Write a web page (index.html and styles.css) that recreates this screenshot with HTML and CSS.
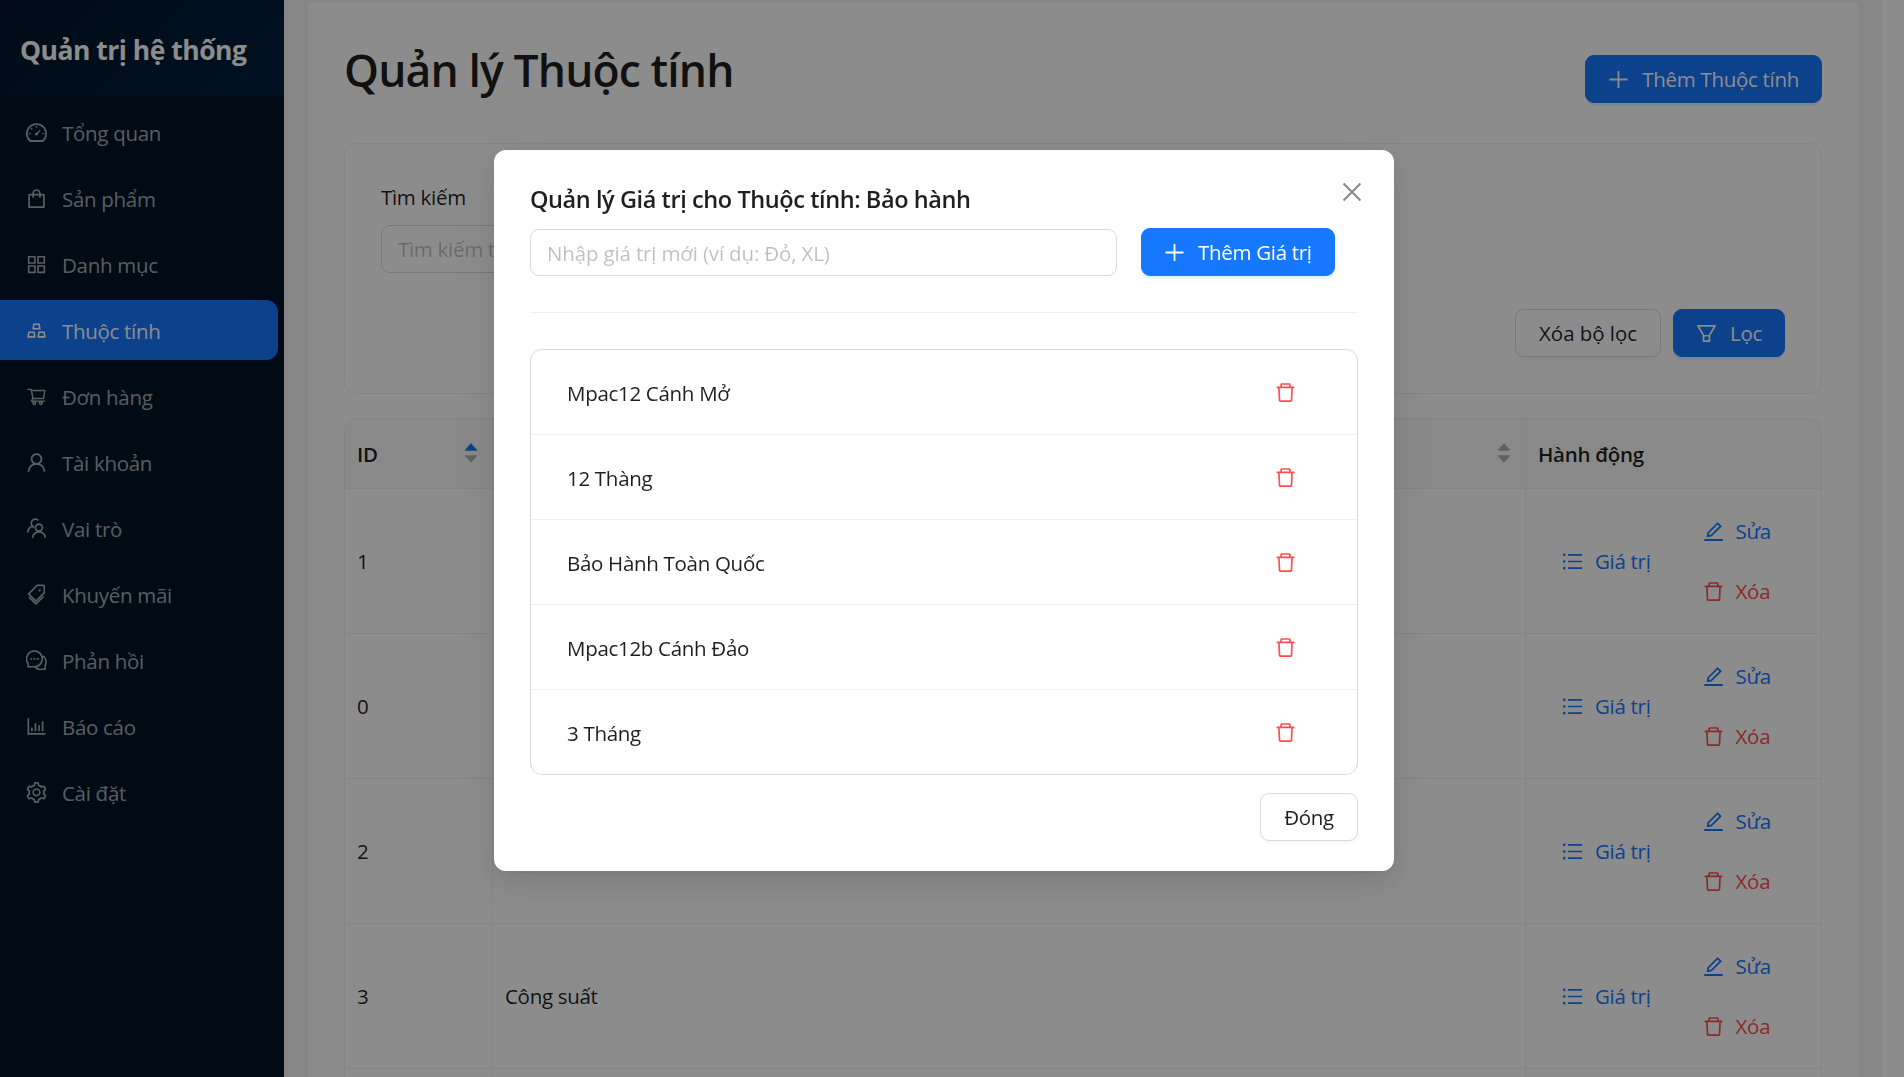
FILE: index.html
```html
<!DOCTYPE html>
<html lang="vi">
<head>
<meta charset="utf-8">
<title>Quản lý Thuộc tính</title>
<link rel="stylesheet" href="styles.css">
</head>
<body>
<svg class="sprite" aria-hidden="true">
  <symbol id="i-dashboard" viewBox="64 64 896 896"><path d="M924.8 385.6a446.7 446.7 0 00-96-142.4 446.7 446.7 0 00-142.4-96C631.1 123.8 572.5 112 512 112s-119.1 11.8-174.4 35.2a446.7 446.7 0 00-142.4 96 446.7 446.7 0 00-96 142.4C75.8 440.9 64 499.5 64 560c0 132.7 58.3 257.7 159.9 343.1l1.7 1.4c5.8 4.8 13.1 7.5 20.6 7.5h531.7c7.5 0 14.8-2.7 20.6-7.5l1.7-1.4C901.7 817.7 960 692.7 960 560c0-60.5-11.9-119.1-35.2-174.4zM761.4 836H262.6A371.12 371.12 0 01140 560c0-99.4 38.7-192.8 109-263 70.3-70.3 163.7-109 263-109 99.4 0 192.8 38.7 263 109 70.3 70.3 109 163.7 109 263 0 105.6-44.5 205.5-122.6 276z"/><circle cx="508" cy="585" r="60"/><path class="line" stroke-width="56" d="M512 582L672 420M512 232v80M184 560h80M760 560h80M282 330l54 54"/></symbol>
  <symbol id="i-shopping" viewBox="64 64 896 896"><path d="M832 312H696v-16c0-101.6-82.4-184-184-184s-184 82.4-184 184v16H192c-17.7 0-32 14.3-32 32v536c0 17.7 14.3 32 32 32h640c17.7 0 32-14.3 32-32V344c0-17.7-14.3-32-32-32zm-432-16c0-61.9 50.1-112 112-112s112 50.1 112 112v16H400v-16zm392 544H232V384h96v88c0 4.4 3.6 8 8 8h56c4.4 0 8-3.6 8-8v-88h224v88c0 4.4 3.6 8 8 8h56c4.4 0 8-3.6 8-8v-88h96v456z"/></symbol>
  <symbol id="i-appstore" viewBox="64 64 896 896"><path d="M464 144H160c-8.8 0-16 7.2-16 16v304c0 8.8 7.2 16 16 16h304c8.8 0 16-7.2 16-16V160c0-8.8-7.2-16-16-16zm-52 268H212V212h200v200zm452-268H560c-8.8 0-16 7.2-16 16v304c0 8.8 7.2 16 16 16h304c8.8 0 16-7.2 16-16V160c0-8.8-7.2-16-16-16zm-52 268H612V212h200v200zM464 544H160c-8.8 0-16 7.2-16 16v304c0 8.8 7.2 16 16 16h304c8.8 0 16-7.2 16-16V560c0-8.8-7.2-16-16-16zm-52 268H212V612h200v200zm452-268H560c-8.8 0-16 7.2-16 16v304c0 8.8 7.2 16 16 16h304c8.8 0 16-7.2 16-16V560c0-8.8-7.2-16-16-16zm-52 268H612V612h200v200z"/></symbol>
  <symbol id="i-gold" viewBox="64 64 896 896"><path d="M342 472h342c.4 0 .9 0 1.3-.1 4.4-.7 7.3-4.8 6.6-9.2l-40.2-248c-.6-3.9-4-6.7-7.9-6.7H382.2c-3.9 0-7.3 2.8-7.9 6.7l-40.2 248c-.1.4-.1.9-.1 1.3 0 4.4 3.6 8 8 8zm91.2-196h159.5l20.7 128h-201l20.8-128zm2.5 282.7c-.6-3.9-4-6.7-7.9-6.7H166.2c-3.9 0-7.3 2.8-7.9 6.7l-40.2 248c-.1.4-.1.9-.1 1.3 0 4.4 3.6 8 8 8h342c.4 0 .9 0 1.3-.1 4.4-.7 7.3-4.8 6.6-9.2l-40.2-248zM196.5 748l20.7-128h159.5l20.7 128H196.5zm709.4 58.7l-40.2-248c-.6-3.9-4-6.7-7.9-6.7H596.2c-3.9 0-7.3 2.8-7.9 6.7l-40.2 248c-.1.4-.1.9-.1 1.3 0 4.4 3.6 8 8 8h342c.4 0 .9 0 1.3-.1 4.3-.7 7.3-4.8 6.6-9.2zM626.5 748l20.7-128h159.5l20.7 128H626.5z"/></symbol>
  <symbol id="i-cart" viewBox="0 0 1024 1024"><path d="M922.9 701.9H327.4l29.9-60.9 496.8-.9c16.8 0 31.2-12 34.2-28.6l68.8-385.1c1.8-10.1-.9-20.5-7.5-28.4a34.99 34.99 0 00-26.6-12.5l-632-2.1-5.4-25.4c-3.4-16.2-18-28-34.6-28H96.5a35.3 35.3 0 100 70.6h125.9L246 312.8l58.1 281.3-74.8 122.1a34.96 34.96 0 00-3 36.8c6 11.9 18.1 19.4 31.5 19.4h62.8a102.43 102.43 0 00-20.6 61.7c0 56.6 46 102.6 102.6 102.6s102.6-46 102.6-102.6c0-22.3-7.4-44-20.6-61.7h161.1a102.43 102.43 0 00-20.6 61.7c0 56.6 46 102.6 102.6 102.6s102.6-46 102.6-102.6c0-22.3-7.4-44-20.6-61.7H923c19.4 0 35.3-15.8 35.3-35.3a35.42 35.42 0 00-35.4-35.2zM305.7 253l575.8 1.9-56.4 315.8-452.3.8L305.7 253zm96.9 612.7c-17.4 0-31.6-14.2-31.6-31.6 0-17.4 14.2-31.6 31.6-31.6s31.6 14.2 31.6 31.6a31.6 31.6 0 01-31.6 31.6zm325.1 0c-17.4 0-31.6-14.2-31.6-31.6 0-17.4 14.2-31.6 31.6-31.6s31.6 14.2 31.6 31.6a31.6 31.6 0 01-31.6 31.6z"/></symbol>
  <symbol id="i-user" viewBox="64 64 896 896"><path d="M858.5 763.6a374 374 0 00-80.6-119.5 375.63 375.63 0 00-119.5-80.6c-.4-.2-.8-.3-1.2-.5C719.5 518 760 444.7 760 362c0-137-111-248-248-248S264 225 264 362c0 82.7 40.5 156 102.8 201.1-.4.2-.8.3-1.2.5-44.8 18.9-85 46-119.5 80.6a375.63 375.63 0 00-80.6 119.5A371.7 371.7 0 00136 901.8a8 8 0 008 8.2h60c4.4 0 7.9-3.5 8-7.8 2-77.2 33-149.5 87.8-204.3 56.7-56.7 132-87.9 212.2-87.9s155.5 31.2 212.2 87.9C779 752.7 810 825 812 902.2c.1 4.4 3.6 7.8 8 7.8h60a8 8 0 008-8.2c-1-47.8-10.9-94.3-29.5-138.2zM512 534c-45.9 0-89.1-17.9-121.6-50.4S340 407.9 340 362c0-45.9 17.9-89.1 50.4-121.6S466.1 190 512 190s89.1 17.9 121.6 50.4S684 316.1 684 362c0 45.9-17.9 89.1-50.4 121.6S557.9 534 512 534z"/></symbol>
  <symbol id="i-team" viewBox="64 64 896 896"><path class="line" stroke-width="72" d="M466 474a150 150 0 1 0 300 0a150 150 0 1 0-300 0M346 908a270 250 0 0 1 540 0M590 170A146 146 0 1 0 336 402Q150 470 136 690M336 402q34 44 78 54"/></symbol>
  <symbol id="i-tags" viewBox="64 64 896 896"><path class="line" stroke-width="68" d="M806 124H540L176 486 484 790 842 444V160Q842 124 806 124ZM186 622L484 908 816 598"/><circle cx="648" cy="340" r="48"/></symbol>
  <symbol id="i-comment" viewBox="64 64 896 896"><path class="line" stroke-width="68" d="M424 776H158V650A336 336 0 1 1 424 776ZM786 318C928 412 958 590 882 726V884H726C620 916 548 890 470 806"/><path d="M250 400h76v76h-76zM390 400h76v76h-76zM530 400h76v76h-76z"/></symbol>
  <symbol id="i-chart" viewBox="64 64 896 896"><path d="M888 792H200V168c0-4.4-3.6-8-8-8h-56c-4.4 0-8 3.6-8 8v688c0 4.4 3.6 8 8 8h752c4.4 0 8-3.6 8-8v-56c0-4.4-3.6-8-8-8zm-600-80h56c4.4 0 8-3.6 8-8V560c0-4.4-3.6-8-8-8h-56c-4.4 0-8 3.6-8 8v144c0 4.4 3.6 8 8 8zm152 0h56c4.4 0 8-3.6 8-8V384c0-4.4-3.6-8-8-8h-56c-4.4 0-8 3.6-8 8v320c0 4.4 3.6 8 8 8zm152 0h56c4.4 0 8-3.6 8-8V462c0-4.4-3.6-8-8-8h-56c-4.4 0-8 3.6-8 8v242c0 4.4 3.6 8 8 8zm152 0h56c4.4 0 8-3.6 8-8V304c0-4.4-3.6-8-8-8h-56c-4.4 0-8 3.6-8 8v400c0 4.4 3.6 8 8 8z"/></symbol>
  <symbol id="i-setting" viewBox="64 64 896 896"><path d="M924.8 625.7l-65.5-56c3.1-19 4.7-38.4 4.7-57.8s-1.6-38.8-4.7-57.8l65.5-56a32.03 32.03 0 009.3-35.2l-.9-2.6a443.74 443.74 0 00-79.7-137.9l-1.8-2.1a32.12 32.12 0 00-35.1-9.5l-81.3 28.9c-30-24.6-63.5-44-99.7-57.6l-15.7-85a32.05 32.05 0 00-25.8-25.7l-2.7-.5c-52.1-9.4-106.9-9.4-159 0l-2.7.5a32.05 32.05 0 00-25.8 25.7l-15.8 85.4a351.86 351.86 0 00-99 57.4l-81.9-29.1a32 32 0 00-35.1 9.5l-1.8 2.1a446.02 446.02 0 00-79.7 137.9l-.9 2.6c-4.5 12.5-.8 26.5 9.3 35.2l66.3 56.6c-3.1 18.8-4.6 38-4.6 57.1 0 19.2 1.5 38.4 4.6 57.1L99 625.5a32.03 32.03 0 00-9.3 35.2l.9 2.6c18.1 50.4 44.9 96.9 79.7 137.9l1.8 2.1a32.12 32.12 0 0035.1 9.5l81.9-29.1c29.8 24.5 63.1 43.9 99 57.4l15.8 85.4a32.05 32.05 0 0025.8 25.7l2.7.5a449.4 449.4 0 00159 0l2.7-.5a32.05 32.05 0 0025.8-25.7l15.7-85a350 350 0 0099.7-57.6l81.3 28.9a32 32 0 0035.1-9.5l1.8-2.1c34.8-41.1 61.6-87.5 79.7-137.9l.9-2.6c4.5-12.3.8-26.3-9.3-35zM788.3 465.9c2.5 15.1 3.8 30.6 3.8 46.1s-1.3 31-3.8 46.1l-6.6 40.1 74.7 63.9a370.03 370.03 0 01-42.6 73.6L721 702.8l-31.4 25.8c-23.9 19.6-50.5 35-79.3 45.8l-38.1 14.3-17.9 97a377.5 377.5 0 01-85 0l-17.9-97.2-37.8-14.5c-28.5-10.8-55-26.2-78.7-45.7l-31.4-25.9-93.4 33.2c-17-22.9-31.2-47.6-42.6-73.6l75.5-64.5-6.5-40c-2.4-14.9-3.7-30.3-3.7-45.5 0-15.3 1.2-30.6 3.7-45.5l6.5-40-75.5-64.5c11.3-26.1 25.6-50.7 42.6-73.6l93.4 33.2 31.4-25.9c23.7-19.5 50.2-34.9 78.7-45.7l37.9-14.3 17.9-97.2c28.1-3.2 56.8-3.2 85 0l17.9 97 38.1 14.3c28.7 10.8 55.4 26.2 79.3 45.8l31.4 25.8 92.8-32.9c17 22.9 31.2 47.6 42.6 73.6L781.8 426l6.5 39.9zM512 326c-97.2 0-176 78.8-176 176s78.8 176 176 176 176-78.8 176-176-78.8-176-176-176zm79.2 255.2A111.6 111.6 0 01512 614c-29.9 0-58-11.7-79.2-32.8A111.6 111.6 0 01400 502c0-29.9 11.7-58 32.8-79.2C454 401.6 482.1 390 512 390c29.9 0 58 11.6 79.2 32.8A111.6 111.6 0 01624 502c0 29.9-11.7 58-32.8 79.2z"/></symbol>
  <symbol id="i-plus" viewBox="64 64 896 896"><path d="M482 152h60q8 0 8 8v704q0 8-8 8h-60q-8 0-8-8V160q0-8 8-8zM136 474h752q8 0 8 8v60q0 8-8 8H136q-8 0-8-8v-60q0-8 8-8z"/></symbol>
  <symbol id="i-close" viewBox="64 64 896 896"><path class="line" stroke-width="82" d="M195 195L829 829M829 195L195 829"/></symbol>
  <symbol id="i-filter" viewBox="64 64 896 896"><path d="M880.1 154H143.9c-24.5 0-39.8 26.7-27.5 48L349 597.4V838c0 17.7 14.2 32 31.8 32h262.4c17.6 0 31.8-14.3 31.8-32V597.4L907.7 202c12.2-21.3-3.1-48-27.6-48zM603.4 798H420.6V642h182.9v156zm9.6-236.6l-9.5 16.6h-183l-9.5-16.6L212.7 226h598.6L613 561.4z"/></symbol>
  <symbol id="i-list" viewBox="64 64 896 896"><path d="M912 192H328c-4.4 0-8 3.6-8 8v56c0 4.4 3.6 8 8 8h584c4.4 0 8-3.6 8-8v-56c0-4.4-3.6-8-8-8zm0 284H328c-4.4 0-8 3.6-8 8v56c0 4.4 3.6 8 8 8h584c4.4 0 8-3.6 8-8v-56c0-4.4-3.6-8-8-8zm0 284H328c-4.4 0-8 3.6-8 8v56c0 4.4 3.6 8 8 8h584c4.4 0 8-3.6 8-8v-56c0-4.4-3.6-8-8-8zM104 228a56 56 0 10112 0 56 56 0 10-112 0zm0 284a56 56 0 10112 0 56 56 0 10-112 0zm0 284a56 56 0 10112 0 56 56 0 10-112 0z"/></symbol>
  <symbol id="i-edit" viewBox="64 64 896 896"><path d="M257.7 752c2 0 4-.2 6-.5L431.9 722c2-.4 3.9-1.3 5.3-2.8l423.9-423.9a9.96 9.96 0 000-14.1L694.9 114.9c-1.9-1.9-4.4-2.9-7.1-2.9s-5.2 1-7.1 2.9L256.8 538.8c-1.5 1.5-2.4 3.3-2.8 5.3l-29.5 168.2a33.5 33.5 0 009.4 29.8c6.6 6.4 14.9 9.9 23.8 9.9zm67.4-174.4L687.8 215l73.3 73.3-362.7 362.6-88.9 15.7 15.6-89zM880 836H144c-17.7 0-32 14.3-32 32v36c0 4.4 3.6 8 8 8h784c4.4 0 8-3.6 8-8v-36c0-17.7-14.3-32-32-32z"/></symbol>
  <symbol id="i-delete" viewBox="64 64 896 896"><path d="M360 184h-8c4.4 0 8-3.6 8-8v8h304v-8c0 4.4 3.6 8 8 8h-8v72h72v-80c0-35.3-28.7-64-64-64H352c-35.3 0-64 28.7-64 64v80h72v-72zm504 72H160c-17.7 0-32 14.3-32 32v32c0 4.4 3.6 8 8 8h60.4l24.7 523c1.6 34.1 29.8 61 63.9 61h454c34.2 0 62.3-26.8 63.9-61l24.7-523H888c4.4 0 8-3.6 8-8v-32c0-17.7-14.3-32-32-32zM731.3 840H292.7l-24.2-512h487l-24.2 512z"/></symbol>
  <symbol id="i-up" viewBox="0 0 1024 1024"><path d="M858.9 689L530.5 308.2c-9.4-10.9-27.5-10.9-37 0L165.1 689c-12.2 14.2-1.2 35 18.5 35h656.8c19.7 0 30.7-20.8 18.5-35z"/></symbol>
  <symbol id="i-down" viewBox="0 0 1024 1024"><path d="M840.4 300H183.6c-19.7 0-30.7 20.8-18.5 35l328.4 380.8c9.4 10.9 27.5 10.9 37 0L858.9 335c12.2-14.2 1.2-35-18.5-35z"/></symbol>
</svg>

<div class="layout">
  <aside class="sidebar">
    <div class="brand">Quản trị hệ thống</div>
    <nav class="menu">
      <a class="menu-item"><svg class="icon"><use href="#i-dashboard"/></svg>Tổng quan</a>
      <a class="menu-item"><svg class="icon"><use href="#i-shopping"/></svg>Sản phẩm</a>
      <a class="menu-item"><svg class="icon"><use href="#i-appstore"/></svg>Danh mục</a>
      <a class="menu-item active"><svg class="icon"><use href="#i-gold"/></svg>Thuộc tính</a>
      <a class="menu-item"><svg class="icon"><use href="#i-cart"/></svg>Đơn hàng</a>
      <a class="menu-item"><svg class="icon"><use href="#i-user"/></svg>Tài khoản</a>
      <a class="menu-item"><svg class="icon"><use href="#i-team"/></svg>Vai trò</a>
      <a class="menu-item"><svg class="icon"><use href="#i-tags"/></svg>Khuyến mãi</a>
      <a class="menu-item"><svg class="icon"><use href="#i-comment"/></svg>Phản hồi</a>
      <a class="menu-item"><svg class="icon"><use href="#i-chart"/></svg>Báo cáo</a>
      <a class="menu-item"><svg class="icon"><use href="#i-setting"/></svg>Cài đặt</a>
    </nav>
  </aside>

  <main class="content">
    <div class="panel">
      <header class="page-head">
        <h1>Quản lý Thuộc tính</h1>
        <button class="btn primary"><svg class="icon"><use href="#i-plus"/></svg>Thêm Thuộc tính</button>
      </header>

      <section class="filters">
        <label class="label">Tìm kiếm</label>
        <div class="input search">Tìm kiếm theo tên</div>
        <div class="filter-actions">
          <button class="btn wide">Xóa bộ lọc</button>
          <button class="btn primary"><svg class="icon"><use href="#i-filter"/></svg>Lọc</button>
        </div>
      </section>

      <section class="table">
        <div class="row head">
          <div class="cell sortable">ID<span class="sorter"><svg class="on"><use href="#i-up"/></svg><svg><use href="#i-down"/></svg></span></div>
          <div class="cell sortable"><span class="sorter"><svg><use href="#i-up"/></svg><svg><use href="#i-down"/></svg></span></div>
          <div class="cell">Hành động</div>
        </div>
        <div class="row">
          <div class="cell">1</div><div class="cell"></div>
          <div class="cell actions"><a class="link"><svg class="icon"><use href="#i-list"/></svg>Giá trị</a><div class="stack"><a class="link"><svg class="icon"><use href="#i-edit"/></svg>Sửa</a><a class="link danger"><svg class="icon"><use href="#i-delete"/></svg>Xóa</a></div></div>
        </div>
        <div class="row">
          <div class="cell">0</div><div class="cell"></div>
          <div class="cell actions"><a class="link"><svg class="icon"><use href="#i-list"/></svg>Giá trị</a><div class="stack"><a class="link"><svg class="icon"><use href="#i-edit"/></svg>Sửa</a><a class="link danger"><svg class="icon"><use href="#i-delete"/></svg>Xóa</a></div></div>
        </div>
        <div class="row">
          <div class="cell">2</div><div class="cell"></div>
          <div class="cell actions"><a class="link"><svg class="icon"><use href="#i-list"/></svg>Giá trị</a><div class="stack"><a class="link"><svg class="icon"><use href="#i-edit"/></svg>Sửa</a><a class="link danger"><svg class="icon"><use href="#i-delete"/></svg>Xóa</a></div></div>
        </div>
        <div class="row">
          <div class="cell">3</div><div class="cell">Công suất</div>
          <div class="cell actions"><a class="link"><svg class="icon"><use href="#i-list"/></svg>Giá trị</a><div class="stack"><a class="link"><svg class="icon"><use href="#i-edit"/></svg>Sửa</a><a class="link danger"><svg class="icon"><use href="#i-delete"/></svg>Xóa</a></div></div>
        </div>
        <div class="row"><div class="cell"></div><div class="cell"></div><div class="cell"></div></div>
      </section>
    </div>
  </main>
</div>

<div class="mask">
  <div class="modal" role="dialog">
    <button class="close" aria-label="Close"><svg class="icon"><use href="#i-close"/></svg></button>
    <h2>Quản lý Giá trị cho Thuộc tính: Bảo hành</h2>
    <div class="add-row">
      <div class="input">Nhập giá trị mới (ví dụ: Đỏ, XL)</div>
      <button class="btn primary"><svg class="icon"><use href="#i-plus"/></svg>Thêm Giá trị</button>
    </div>
    <hr>
    <ul class="values">
      <li>Mpac12 Cánh Mở<svg class="icon"><use href="#i-delete"/></svg></li>
      <li>12 Thàng<svg class="icon"><use href="#i-delete"/></svg></li>
      <li>Bảo Hành Toàn Quốc<svg class="icon"><use href="#i-delete"/></svg></li>
      <li>Mpac12b Cánh Đảo<svg class="icon"><use href="#i-delete"/></svg></li>
      <li>3 Tháng<svg class="icon"><use href="#i-delete"/></svg></li>
    </ul>
    <footer><button class="btn">Đóng</button></footer>
  </div>
</div>
</body>
</html>
```
FILE: styles.css
```css
* { box-sizing: border-box; }

body {
  margin: 0;
  height: 1077px;
  overflow: hidden;
  background: #fff;
  color: rgba(0, 0, 0, .88);
  font: 400 20.5px/33px "Open Sans", "Noto Sans", sans-serif;
  letter-spacing: -.3px;
}

h1, h2, ul, hr { margin: 0; padding: 0; }

.sprite { display: none; }
.line { fill: none; stroke: currentColor; }
.icon { width: 21px; height: 21px; flex: none; fill: currentColor; }

.layout { display: flex; height: 1077px; overflow: hidden; }

/* Sidebar */
.sidebar { width: 284px; flex: none; background: #001529; color: rgba(255, 255, 255, .65); }
.brand {
  height: 96px;
  padding: 2px 0 0 20px;
  background: linear-gradient(135deg, #001529, #002140);
  color: #fff;
  font-size: 26.5px;
  font-weight: 700;
  line-height: 96px;
  letter-spacing: -.5px;
}
.menu { display: flex; flex-direction: column; gap: 6px; padding: 6px 6px 0 0; }
.menu-item {
  display: flex;
  align-items: center;
  gap: 15px;
  height: 60px;
  padding: 2px 0 0 26px;
  border-radius: 0 12px 12px 0;
}
.menu-item .icon { margin-top: -2px; }
.menu-item.active { background: #1677ff; color: #fff; }

/* Page */
.content { width: 1598px; flex: none; padding: 3px 24px 0; background: #f5f5f5; }
.panel { height: 1100px; padding: 36px; background: #fff; }
.page-head { display: flex; justify-content: space-between; height: 104px; }
.page-head .btn { margin-top: 16px; }
h1 { font-size: 44.5px; font-weight: 540; line-height: 61px; letter-spacing: -.9px; }

.btn {
  display: inline-flex;
  align-items: center;
  justify-content: center;
  gap: 13px;
  height: 48px;
  min-width: 98px;
  padding: 1px 22px 0;
  border: 1px solid #d9d9d9;
  border-radius: 9px;
  background: #fff;
  box-shadow: 0 3px 0 rgba(0, 0, 0, .02);
  color: inherit;
  font: inherit;
  letter-spacing: inherit;
  white-space: nowrap;
}
.btn.wide { min-width: 146px; letter-spacing: -.05px; }
.btn.primary { border-color: #1677ff; background: #1677ff; color: #fff; box-shadow: 0 3px 0 rgba(5, 145, 255, .1); }

.input {
  height: 48px;
  padding: 0 16px;
  border: 1px solid #d9d9d9;
  border-radius: 9px;
  background: #fff;
  color: rgba(0, 0, 0, .25);
  line-height: 47px;
  white-space: nowrap;
}

.filters {
  display: flex;
  flex-direction: column;
  height: 251px;
  padding: 36px;
  border: 1px solid #f0f0f0;
  border-radius: 12px;
}
.label { height: 45px; line-height: 35px; }
.search { width: 350px; }
.filter-actions { display: flex; justify-content: flex-end; gap: 12px; margin-top: 36px; }

.table { margin-top: 24px; border: 1px solid #f0f0f0; border-radius: 12px 12px 0 0; overflow: hidden; }
.row { display: grid; grid-template-columns: 148px 1033px 1fr; height: 145px; }
.row.head { height: 70px; background: #fafafa; font-weight: 600; letter-spacing: -.3px; }
.row.head .cell { padding-top: 2px; }
.cell { display: flex; align-items: center; padding-left: 12px; border-right: 1px solid #f0f0f0; border-bottom: 1px solid #f0f0f0; }
.cell:last-child { border-right: 0; }
.sortable { justify-content: space-between; padding-right: 12px; }
.sorter { display: flex; flex-direction: column; margin: -4px 0 0 auto; }
.sorter svg { width: 18px; height: 18px; fill: rgba(0, 0, 0, .29); }
.sorter svg + svg { margin-top: -6px; }
.sorter .on { fill: #1677ff; }
.actions { gap: 52px; padding-left: 36px; }
.stack { display: flex; flex-direction: column; gap: 12px; }
.link { display: flex; align-items: center; gap: 12px; height: 48px; color: #1677ff; }
.link.danger { color: #ff4d4f; }

/* Dialog */
.mask { position: fixed; inset: 0; background: rgba(0, 0, 0, .45); }
.modal {
  position: absolute;
  left: 494px;
  top: 150px;
  width: 900px;
  height: 721px;
  padding: 30px 36px;
  border-radius: 12px;
  background: #fff;
  box-shadow: 0 9px 24px rgba(0, 0, 0, .08), 0 4px 9px -6px rgba(0, 0, 0, .12), 0 13px 42px 12px rgba(0, 0, 0, .05);
}
.close {
  position: absolute;
  top: 25px;
  right: 26px;
  display: grid;
  place-items: center;
  width: 33px;
  height: 33px;
  padding: 0;
  border: 0;
  background: none;
  color: rgba(0, 0, 0, .45);
}
.close .icon { width: 24px; height: 24px; }
h2 { font-size: 23.5px; font-weight: 600; line-height: 38px; letter-spacing: -.42px; }
.add-row { display: flex; align-items: center; gap: 24px; margin-top: 10px; }
.add-row .input { width: 587px; height: 47px; letter-spacing: -.15px; }
hr { height: 1px; margin: 36px 0; border: 0; background: #f0f0f0; }
.values { border: 1px solid #d9d9d9; border-radius: 12px; list-style: none; }
.values li {
  display: flex;
  align-items: center;
  justify-content: space-between;
  height: 85px;
  padding: 2px 61px 0 36px;
  border-bottom: 1px solid #f0f0f0;
}
.values li:last-child { height: 84px; border-bottom: 0; }
.values .icon { margin-top: -2px; color: #ff4d4f; }
footer { display: flex; justify-content: flex-end; margin-top: 18px; }
```
